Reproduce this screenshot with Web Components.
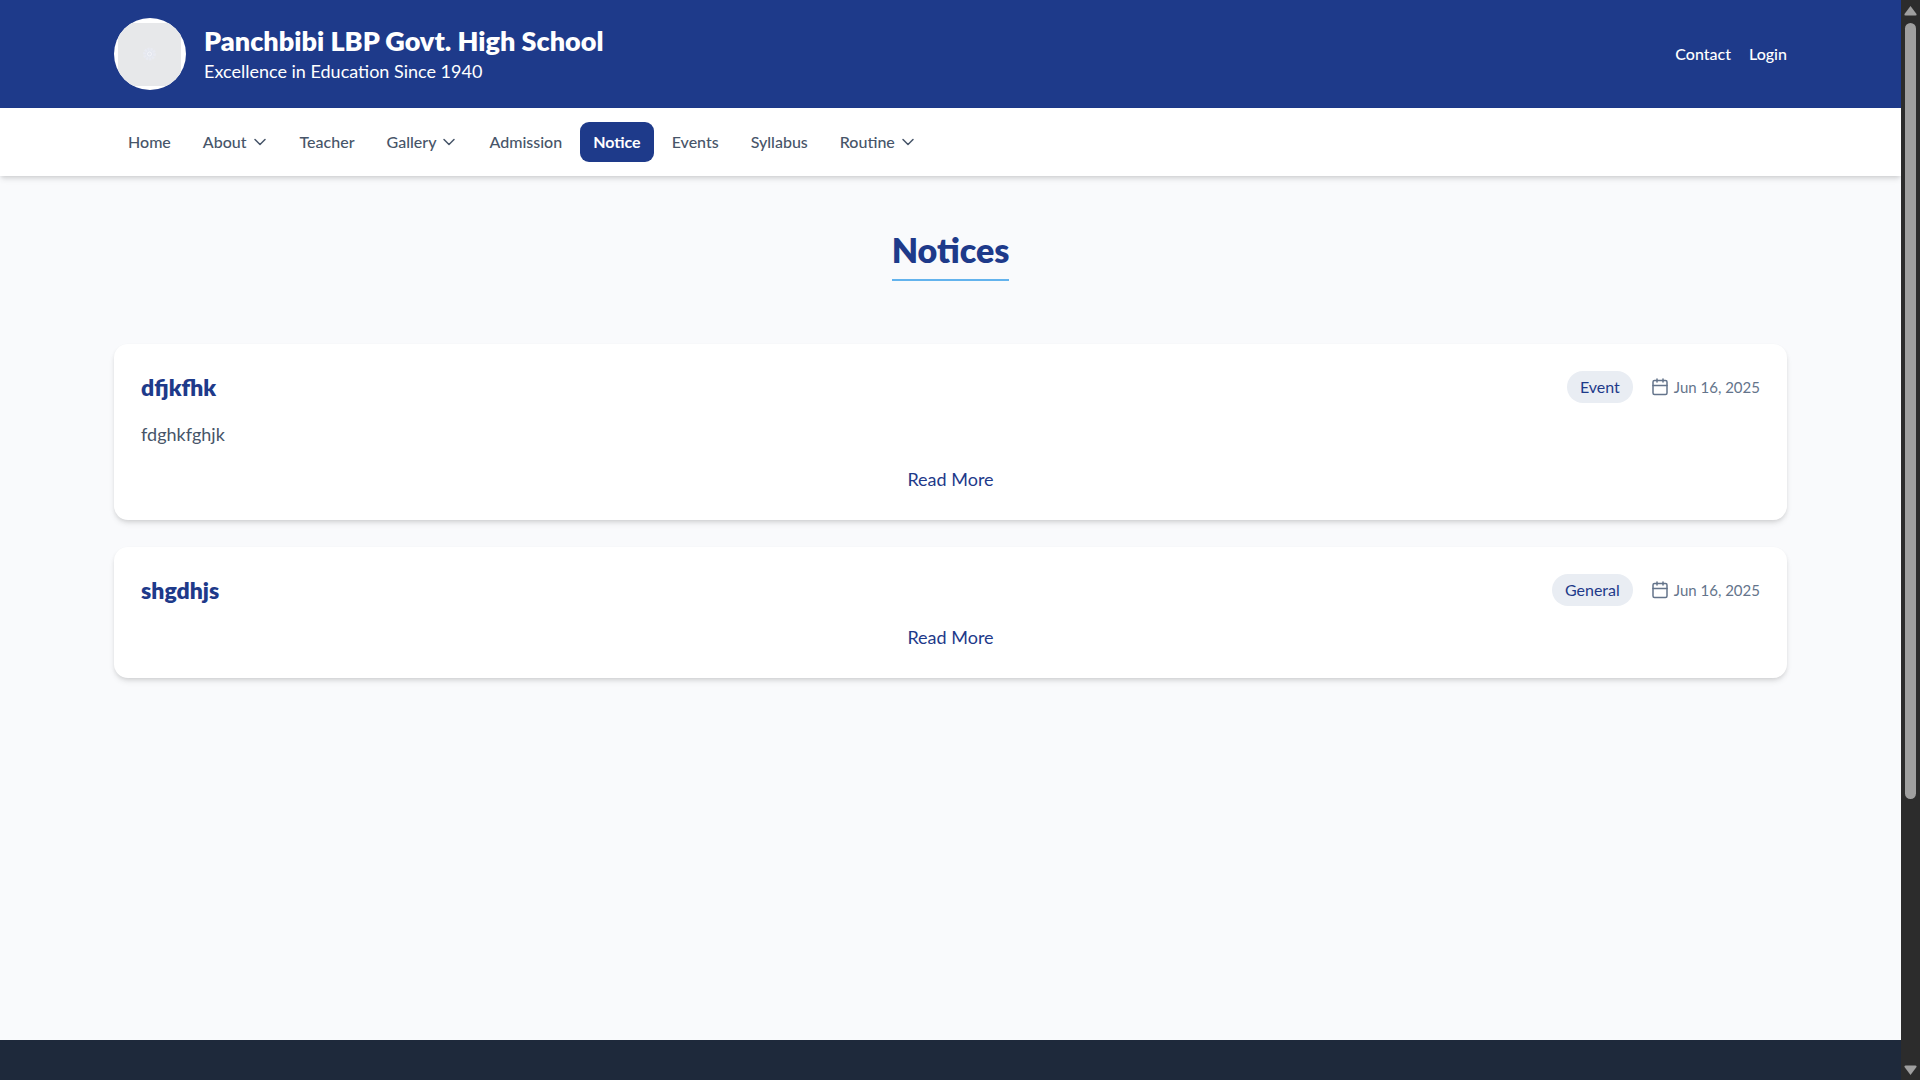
<!DOCTYPE html>
<html lang="en">
<head>
<meta charset="utf-8">
<title>Notices - Panchbibi LBP Govt. High School</title>
<style>
html, body { margin: 0; height: 100%; }
body { font-family: Lato, "Open Sans", sans-serif; font-size: 18px; line-height: 27px; color: #475569; background: #f9fafc; overflow: hidden; }
</style>
</head>
<body>
<school-page>
  <school-header slot="header"></school-header>
  <school-nav slot="nav"></school-nav>
  <page-title>Notices</page-title>
  <notice-card heading="dfjkfhk" category="Event" date="Jun 16, 2025">fdghkfghjk</notice-card>
  <notice-card heading="shgdhjs" category="General" date="Jun 16, 2025"></notice-card>
</school-page>
<script>
class Base extends HTMLElement {
  connectedCallback() {
    if (!this.shadowRoot) this.attachShadow({ mode: "open" }).innerHTML = this.render();
  }
}

customElements.define("school-page", class extends Base {
  render() { return `
<style>
:host { display: flex; height: 100vh; }
.page { flex: 1; min-width: 0; display: flex; flex-direction: column; overflow: hidden; }
main { flex: 1; padding: 54px 6%; display: flex; flex-direction: column; gap: 27px; box-sizing: border-box; }
footer { height: 40px; flex: none; background: #1e293b; }
</style>
<div class="page">
  <slot name="header"></slot>
  <slot name="nav"></slot>
  <main><slot></slot></main>
  <footer></footer>
</div>
<scroll-rail></scroll-rail>`; }
});

customElements.define("scroll-rail", class extends Base {
  render() { return `
<style>
:host { display: flex; flex-direction: column; align-items: center; width: 19px; background: #2c2c2c; }
svg { display: block; fill: #9f9f9f; flex: none; }
.track { flex: 1; width: 11px; }
.thumb { height: 75%; border-radius: 6px; background: #9f9f9f; }
</style>
<svg width="19" height="23" viewBox="0 0 19 23"><path d="M9.500 6 L15.500 14 Q16 15.500 14.500 15.500 H4.500 Q3 15.500 3.500 14Z"/></svg>
<div class="track"><div class="thumb"></div></div>
<svg width="19" height="23" viewBox="0 0 19 23"><path d="M9.500 18 L3.500 10 Q3 8.500 4.500 8.500 H14.500 Q16 8.500 15.500 10Z"/></svg>`; }
});

customElements.define("school-header", class extends Base {
  render() { return `
<style>
:host { display: block; background: #1e3a8a; color: #fff; }
header { display: flex; align-items: center; justify-content: space-between; padding: 18px 6%; }
.brand { display: flex; align-items: center; gap: 18px; }
.logo { display: block; }
.name { font-size: 27px; line-height: 35px; font-weight: 800; margin: 0; }
.tag { margin: 0; }
.links { display: flex; gap: 18px; }
a { color: inherit; text-decoration: none; font-size: 16px; line-height: 24px; font-weight: 500; }
</style>
<header>
  <div class="brand">
    <svg class="logo" width="72" height="72" viewBox="0 0 72 72" aria-hidden="true">
      <clipPath id="c"><circle cx="36" cy="36" r="36"/></clipPath>
      <g clip-path="url(#c)"><rect width="72" height="72" fill="#fff"/><rect x="4" y="5" width="63" height="63" fill="#e7e8ea"/>
      <circle cx="35.500" cy="36" r="5" fill="#e4e7ef" stroke="#e9ebf2" stroke-width="3" stroke-dasharray="2 1"/><circle cx="35.500" cy="36" r="2" fill="none" stroke="#f3f4f8"/></g>
    </svg>
    <div><p class="name">Panchbibi LBP Govt. High School</p><p class="tag">Excellence in Education Since 1940</p></div>
  </div>
  <div class="links"><a href="#contact">Contact</a><a href="#login">Login</a></div>
</header>`; }
});

customElements.define("school-nav", class extends Base {
  render() {
    const items = ["Home", "About+", "Teacher", "Gallery+", "Admission", "Notice*", "Events", "Syllabus", "Routine+"];
    const chevron = `<svg width="16" height="16" viewBox="0 0 16 16" aria-hidden="true"><path d="M3 5.500 L8 10.500 L13 5.500"/></svg>`;
    return `
<style>
:host { display: block; position: relative; background: #fff; box-shadow: 0 4px 6px -1px rgba(0,0,0,.1), 0 2px 4px -1px rgba(0,0,0,.1); }
nav { display: flex; gap: 4px; padding: 14px 6%; }
a, button { display: flex; align-items: center; gap: 5px; box-sizing: border-box; height: 40px; padding: 0 14px; border: 0; border-radius: 9px; background: none; color: #475569; font: 500 16px/24px Lato, "Open Sans", sans-serif; text-decoration: none; }
.on { padding: 0 13px; background: #1e3a8a; color: #fff; font-weight: 700; }
svg { fill: none; stroke: currentColor; stroke-width: 1.5; stroke-linecap: round; stroke-linejoin: round; }
</style>
<nav>${items.map(t => {
      const n = t.replace(/[+*]/, "");
      return t.endsWith("+") ? `<button type="button" aria-haspopup="true">${n}${chevron}</button>`
        : `<a href="#${n.toLowerCase()}"${t.endsWith("*") ? ' class="on" aria-current="page"' : ""}>${n}</a>`;
    }).join("")}</nav>`;
  }
});

customElements.define("page-title", class extends Base {
  render() { return `
<style>
:host { display: flex; justify-content: center; margin-bottom: 36px; }
h1 { margin: 0; padding-bottom: 10px; border-bottom: 2px solid #63b3ed; color: #1e3a8a; font-size: 34px; line-height: 39px; font-weight: 800; }
</style>
<h1><slot></slot></h1>`; }
});

customElements.define("notice-card", class extends Base {
  render() {
    const g = n => this.getAttribute(n);
    return `
<style>
:host { display: flex; flex-direction: column; gap: 18px; padding: 27px; background: #fff; border-radius: 14px; box-shadow: 0 4px 6px -1px rgba(0,0,0,.1), 0 2px 4px -1px rgba(0,0,0,.1); }
.head { display: flex; justify-content: space-between; align-items: center; }
h2 { margin: 0; color: #1e3a8a; font-size: 23px; line-height: 32px; font-weight: 800; }
.meta { display: flex; align-items: center; gap: 18px; font-size: 16px; line-height: 24px; }
.pill { padding: 4px 13px; border-radius: 16px; background: #e9edf3; color: #1e3a8a; }
.date { display: flex; align-items: center; gap: 5px; color: #64748b; font-size: 15px; }
svg { fill: none; stroke: currentColor; stroke-width: 1.5; stroke-linecap: round; stroke-linejoin: round; }
p { margin: 0; }
button { align-self: center; padding: 0; border: 0; background: none; color: #1e3a8a; font: inherit; }
</style>
<div class="head"><h2>${g("heading")}</h2>
  <div class="meta"><span class="pill">${g("category")}</span>
    <span class="date"><svg width="18" height="18" viewBox="0 0 18 18" aria-hidden="true"><rect x="2" y="2.500" width="14" height="14" rx="1.500"/><path d="M2 7.500H16M6 1V4M12 1V4"/></svg>${g("date")}</span></div></div>
${this.textContent.trim() ? "<p><slot></slot></p>" : ""}
<button type="button">Read More</button>`;
  }
});
</script>
</body>
</html>
